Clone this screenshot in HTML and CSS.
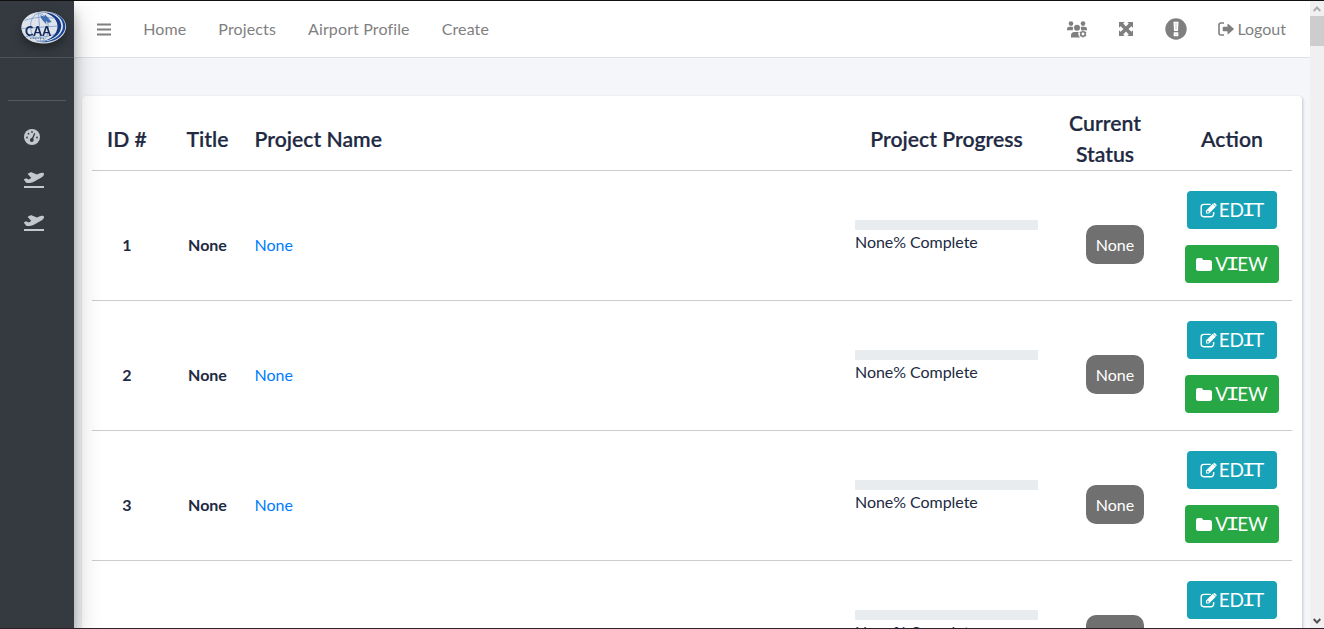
FILE: index.html
```
<!DOCTYPE html>
<html lang="en">
<head>
<meta charset="utf-8">
<title>Projects</title>
<link rel="stylesheet" href="styles.css">
</head>
<body>
<svg class="defs" width="0" height="0" aria-hidden="true">
  <symbol id="plane" viewBox="0 0 20 16"><path d="M0 14h20v2H0zM.1 7.300 2 6.300l2.700 1.100L7.300 6.100 3.900 2.300Q3.500 1.700 4.100 1.400L6.600.3Q7 .1 7.400.3L13 2.400l2.800-1.200Q17.500.4 19 .8q1.500.5.8 2.300-.6 1.500-2 2.200L9.900 9.800q-1.900 1.100-4 1.100H3.200q-.9 0-1.400-.7L.1 8q-.3-.4 0-.7z"/></symbol>
  <symbol id="edit" viewBox="0 0 18 16"><path d="M14.500 9.500v2.300a2.800 2.800 0 0 1-2.800 2.800H4a2.800 2.800 0 0 1-2.800-2.800V4.300A2.800 2.800 0 0 1 4 1.500h7.300" fill="none" stroke="currentColor" stroke-width="1.500"/><path fill-rule="evenodd" d="M6.300 8 13.600.9l3.200 3.200-7.300 7.200H6.300zM7.500 8.900v1.300H9l.7-.7-1.500-1.400z"/><path d="m14.100.7.700-.6q.6-.4 1.200.1l1.500 1.600q.4.600 0 1.100l-.6.600z"/></symbol>
  <symbol id="folder" viewBox="0 0 16 13"><path d="M0 2.200Q0 0 2.200 0h2.700Q7 0 7 2.100h6.300Q16 2.100 16 4.300v6.400Q16 13 13.700 13H2.300Q0 13 0 10.700z"/></symbol>
</svg>
<div class="screen">
  <aside class="sidebar">
    <div class="brand">
      <svg class="logo" width="46" height="36" viewBox="0 0 46 36">
        <g transform="rotate(-4 23 18)">
          <ellipse cx="22.800" cy="18.500" rx="22.300" ry="16" fill="#d9dde2"/>
          <ellipse cx="23.500" cy="18.200" rx="20.800" ry="15" fill="#17469a"/>
          <ellipse cx="21.500" cy="17.500" rx="20.500" ry="15" fill="#e3e7ec"/>
          <ellipse cx="20.500" cy="17.500" rx="19.800" ry="14.500" fill="#123a86"/>
          <ellipse cx="18.500" cy="17.500" rx="18" ry="14.500" fill="#dfe4eb"/>
          <g fill="none" stroke="#6f93c7" stroke-width=".7"><ellipse cx="18.500" cy="18" rx="9" ry="14"/><path d="M18.500 4v28M4 10q16-4 29 0M1 18h35M4 26q16 4 29 0"/></g>
          <path d="m20 6 4 1.500 1-2 3 4 3 4-3 .5-3-2 1 4-3-3.500-2-3z" fill="#3f6eb2"/>
        </g>
        <text x="4" y="27" class="logo-text">CAA</text>
        <path d="M9 29.300h15" stroke="#5c7196" stroke-dasharray="1.500 1"/>
      </svg>
    </div>
    <div class="user-panel"></div>
    <nav class="side-nav">
      <svg class="gauge" width="16" height="16" viewBox="0 0 16 16"><circle cx="8" cy="8" r="8" fill="currentColor"/><g fill="#343a40"><circle cx="3" cy="8.500" r=".9"/><circle cx="4.500" cy="4.700" r=".9"/><circle cx="8" cy="2.900" r=".9"/><circle cx="13" cy="8.500" r=".9"/><circle cx="7.800" cy="11" r="1.900"/><path d="m10.200 3.900 1.100.5-2.600 6.600-1.400-.5z"/></g></svg>
      <svg class="plane" width="20" height="16"><use href="#plane"/></svg>
      <svg class="plane" width="20" height="16"><use href="#plane"/></svg>
    </nav>
  </aside>
  <div class="main">
    <header class="topbar">
      <svg class="menu" width="14" height="13" viewBox="0 0 14 13"><path d="M0 1.500h14M0 6.500h14M0 11.500h14" stroke="currentColor" stroke-width="2"/></svg>
      <nav class="links"><a>Home</a><a>Projects</a><a>Airport Profile</a><a>Create</a></nav>
      <div class="tools">
        <svg class="users" width="20" height="17" viewBox="0 0 20 17" fill="currentColor"><circle cx="4" cy="2.600" r="2.300"/><circle cx="16" cy="2.600" r="2.300"/><circle cx="10" cy="6.800" r="3"/><path d="M0 9.300V8q0-2.300 2.300-2.300h3.200l.8 1Q5.500 8 5.900 9.300zM14 9.300q.4-1.400-.4-2.700l.8-.9h3.300Q20 5.700 20 8v1.300zM4 16.500v-2q0-3.500 3.500-3.500h4.200q-1 2 0 3.600.4 1.500 1.600 1.900z"/><circle cx="16" cy="13" r="2.200" fill="none" stroke="currentColor" stroke-width="1.600"/><path d="M16 9.500v1M16 15.500v1M12.900 11.200l1 .6M18.100 14.200l1 .6M12.900 14.800l1-.6M18.100 11.800l1-.6" stroke="currentColor" stroke-width="1.500"/></svg>
        <svg class="expand" width="14" height="14" viewBox="0 0 14 14" fill="currentColor"><path d="M0 0h5.700L4.200 1.600 7 4.500l2.800-2.900L8.300 0H14v5.700l-1.600-1.500L9.500 7l2.900 2.800L14 8.300V14H8.300l1.500-1.600L7 9.500l-2.800 2.900L5.700 14H0V8.300l1.600 1.500L4.500 7 1.600 4.200 0 5.700z"/></svg>
        <svg class="alert" width="22" height="22" viewBox="0 0 22 22"><circle cx="11" cy="11" r="10.700" fill="currentColor"/><path d="M8.500 3.800h5l-.5 9.200H9zM8.700 14.300h4.600v4H8.700z" fill="#fff"/><path d="M10 5h2l-.3 7h-1.400zM10.200 15.500h1.600V17h-1.600z" fill="#e0e0e0"/></svg>
        <a class="logout"><svg width="16" height="14" viewBox="0 0 16 14"><path d="M6 1H3Q1 1 1 3v8q0 2 2 2h3" fill="none" stroke="currentColor" stroke-width="1.600"/><path d="M5.500 4.800h4V2.400q0-1.100.9-.4L15.600 6.500q.6.500 0 1l-5.200 4.500q-.9.700-.9-.4V9.200h-4q-.8 0-.8-.8V5.600q0-.8.8-.8z" fill="currentColor"/></svg>Logout</a>
      </div>
    </header>
    <section class="card">
      <div class="grid head"><div>ID #</div><div>Title</div><div class="name">Project Name</div><div>Project Progress</div><div class="status">Current<br>Status</div><div>Action</div></div>
      <div class="grid row"><b>1</b><b>None</b><a class="name">None</a><div class="progress"><i></i>None% Complete</div><div class="status"><span class="badge">None</span></div><div class="actions"><a class="btn edit"><svg width="17" height="15"><use href="#edit"/></svg>ED<span class="slab">I</span>T</a><a class="btn view"><svg width="16" height="13"><use href="#folder"/></svg>V<span class="slab">I</span>EW</a></div></div>
      <div class="grid row"><b>2</b><b>None</b><a class="name">None</a><div class="progress"><i></i>None% Complete</div><div class="status"><span class="badge">None</span></div><div class="actions"><a class="btn edit"><svg width="17" height="15"><use href="#edit"/></svg>ED<span class="slab">I</span>T</a><a class="btn view"><svg width="16" height="13"><use href="#folder"/></svg>V<span class="slab">I</span>EW</a></div></div>
      <div class="grid row"><b>3</b><b>None</b><a class="name">None</a><div class="progress"><i></i>None% Complete</div><div class="status"><span class="badge">None</span></div><div class="actions"><a class="btn edit"><svg width="17" height="15"><use href="#edit"/></svg>ED<span class="slab">I</span>T</a><a class="btn view"><svg width="16" height="13"><use href="#folder"/></svg>V<span class="slab">I</span>EW</a></div></div>
      <div class="grid row"><b></b><b></b><a class="name"></a><div class="progress"><i></i>None% Complete</div><div class="status"><span class="badge"></span></div><div class="actions"><a class="btn edit"><svg width="17" height="15"><use href="#edit"/></svg>ED<span class="slab">I</span>T</a><a class="btn view"></a></div></div>
    </section>
  </div>
  <div class="scrollbar"><svg class="chev" width="8" height="6" viewBox="0 0 8 6"><path d="m.7 5 3.300-3.500L7.300 5" fill="none" stroke="#adadad" stroke-width="1.900"/></svg><div class="thumb"></div><svg class="chev down" width="8" height="6" viewBox="0 0 8 6"><path d="M.7 1 4 4.500 7.300 1" fill="none" stroke="#505050" stroke-width="1.900"/></svg></div>
</div>
</body>
</html>
```
FILE: styles.css
```
* { box-sizing: border-box; }
body { margin: 0; overflow: hidden; font: 400 16px/24px Lato, sans-serif; color: #212a42; }
.defs { display: none; }
svg { display: block; flex: none; }
.screen { display: flex; height: 629px; overflow: hidden; border-top: 1px solid #111; border-bottom: 1px solid #2d2028; background: #f4f6f9; }

.sidebar { width: 74px; flex: none; z-index: 2; background: #343a40; color: #c2c7d0; box-shadow: 0 14px 28px rgba(0,0,0,.25), 0 10px 10px rgba(0,0,0,.22); }
.brand { height: 57px; padding: 8px 0 0 21px; border-bottom: 1px solid #4b545c; }
.logo { filter: drop-shadow(0 5px 5px rgba(0,0,0,.35)); }
.logo-text { font: 900 12.500px Lato, sans-serif; fill: #14275a; letter-spacing: .1px; }
.user-panel { height: 43px; margin: 0 8px; border-bottom: 1px solid #4f5962; }
.side-nav { padding: 28px 0 0 24px; fill: currentColor; }
.gauge { margin-bottom: 27px; }
.plane { margin-bottom: 27px; }

.main { flex: none; width: 1236px; }
.topbar { display: flex; align-items: center; height: 57px; padding: 0 24px 0 23.200px; background: #fff; border-bottom: 1px solid #dee2e6; color: #7f7f7f; }
.links { display: flex; gap: 32px; margin-left: 32px; letter-spacing: .13px; }
.tools { display: flex; align-items: center; margin-left: auto; }
.expand { margin-left: 32px; }
.alert { margin-left: 32px; }
.logout { display: flex; align-items: center; gap: 3px; margin-left: 31px; }

.card { width: 1220px; margin: 38px 0 0 8px; padding: 0 10px; border-radius: 4px; background: #fff; box-shadow: 1px 1px 3px rgba(0,0,0,.2); }
.grid { display: grid; grid-template-columns: 70px 91px 592px 203px 124px 120px; border-bottom: 1px solid #ccc; text-align: center; }
.head { height: 75px; align-items: center; padding-top: 12px; font-size: 21.200px; line-height: 31px; font-weight: 600; -webkit-text-stroke: .2px #212a42; }
.grid .name { padding-left: 1.500px; text-align: left; }
.head .status { padding-right: 10px; }
.row { height: 130px; align-items: center; }
.row > b, .row > .name { padding-top: 18px; font-weight: 700; }
.row > .name { font-weight: 400; color: #007bff; }
.progress { padding: 2px 10px 0; text-align: left; letter-spacing: -.05px; }
.progress i { display: block; height: 10px; border-radius: 1px; background: #e9ecef; }
.row .status { padding: 18px 0 0 10px; }
.badge { display: inline-block; vertical-align: middle; width: 58px; height: 39px; border-radius: 10px; background: #717070; color: #fff; line-height: 40px; }
.actions { display: flex; flex-direction: column; align-items: center; gap: 16px; padding-top: 3px; }
.btn { display: flex; align-items: center; justify-content: center; height: 38px; border-radius: 4px; color: #fff; fill: currentColor; font-size: 19px; line-height: 38px; }
.edit { width: 90px; background: #17a2b8; }
.view { width: 94px; background: #28a745; }
.edit svg { margin-right: 2px; }
.view svg { margin-right: 3px; }
.slab { font: 19px/38px "Liberation Mono", monospace; margin: 0 -1.200px; transform: translateY(.5px) scale(1.250, 1.080); }

.scrollbar { display: flex; flex-direction: column; align-items: center; flex: none; width: 14px; padding: 5px 0 4px; background: #f0f0f0; }
.thumb { width: 14px; height: 30px; margin-top: 4px; background: #cdcdcd; }
.down { margin-top: auto; }
```
